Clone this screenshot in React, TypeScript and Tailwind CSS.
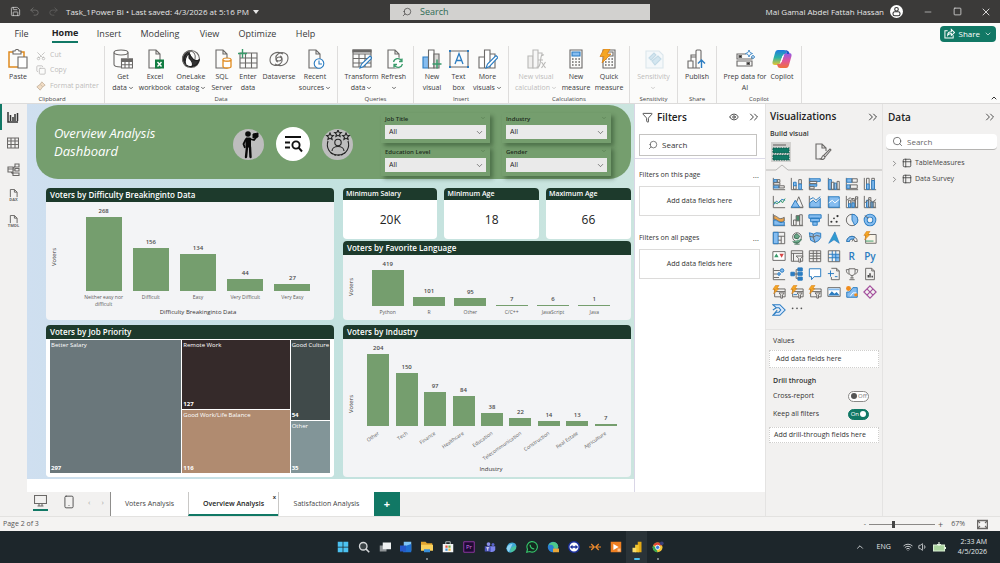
import { useState, type ReactNode } from 'react'
import {
  ChevronDown,
  ChevronRight,
  ChevronUp,
  ChevronsRight,
  Copy,
  Eye,
  Filter,
  Minus,
  Redo2,
  Save,
  Scissors,
  Search,
  Smartphone,
  Square,
  Table2,
  Undo2,
  Volume1,
  Wifi,
  X,
} from 'lucide-react'

const K = '#6b6967'
const B = '#2b7cc1'
const L = '#86bdf0'

function Svg({ size = 20, box = 20, children }: { size?: number; box?: number; children: ReactNode }) {
  return (
    <svg
      width={size}
      height={size}
      viewBox={`0 0 ${box} ${box}`}
      fill="none"
      stroke={K}
      strokeWidth="1.1"
      aria-hidden="true"
      className="shrink-0"
    >
      {children}
    </svg>
  )
}

/* ---------- ribbon icons ---------- */

const doc = <path d="M4 1h7l4 4v14H4zM11 1v4h4" />
const calc = (
  <>
    <path d="M4 1h12v18H4z" />
    <g strokeDasharray="1.6 1.6" strokeWidth="1.5">
      <path d="M6 10h9M6 13h9M6 16h9" />
    </g>
  </>
)

const ribbonIcons: Record<string, ReactNode> = {
  paste: (
    <>
      <path d="M10 18H1V3h15v5" stroke="#e08a1e" strokeWidth="1.5" />
      <path d="M5 5V2h2c0-2 4-2 4 0h2v3z" fill="#fff" />
      <path d="M10 8h9v11h-9z" fill="#fff" />
    </>
  ),
  database: (
    <>
      <ellipse cx="8" cy="3.5" rx="7" ry="2.5" />
      <path d="M1 3.500v12c0 1.500 3 2.500 7 2.500M15 3.500V9" />
      <path d="M8.500 10h11v9h-11z" fill="#fff" />
      <path d="M8.500 10h11v2.500h-11z" fill={K} />
      <path d="M8.500 15.700h11M12 12v7M16 12v7" />
    </>
  ),
  excel: (
    <>
      {doc}
      <path d="M10 10.500h9v9h-9z" fill="#107c41" stroke="none" />
      <path d="M12.500 13l4 4.500M16.500 13l-4 4.500" stroke="#fff" strokeWidth="1.400" />
    </>
  ),
  onelake: (
    <>
      <circle cx="10" cy="10" r="8.500" />
      <path d="M10 1.500C4 2 1 7 1.500 11c.5 3 2 5 4 6.500C3 12 5 6 10 1.500z" fill="#222" />
      <path d="M8 4c2 6 6 9 10 7-1 5-6 8-11 6l-2-1C3 12 5 7 8 4z" fill="#fff" stroke="#222" />
      <path d="M8 4c2 6 6 9 10 7-1 4-4 6-7 6 2-3-1-6-3-8z" fill="#333" stroke="#222" />
      <path d="M10 2c3 1 5 4 4 8" />
    </>
  ),
  sql: (
    <>
      {doc}
      <path d="M11 10.500v7c0 2 8 2 8 0v-7c0 2-8 2-8 0z" fill="#fff" stroke="#e08a1e" strokeWidth="1.300" />
      <ellipse cx="15" cy="10.500" rx="4" ry="1.500" fill="#fff" stroke="#e08a1e" />
    </>
  ),
  enter: (
    <>
      <path d="M2 4h17v15H2zM2 9h17M2 14h17M7.500 4v15M13.500 4v15" />
      <path d="M4.500 0v9M0 4.500h9" stroke="#3a9b6b" strokeWidth="1.400" />
    </>
  ),
  dataverse: (
    <>
      <path d="M14 5C8 1 1 5 1 11c0 5 6 7 10 4 3-2 3-7-1-7-3 0-4 4-1 5" />
      <path d="M6 15c6 4 13 0 13-6 0-5-6-7-10-4-3 2-3 7 1 7 3 0 4-4 1-5" />
    </>
  ),
  recent: (
    <>
      {doc}
      <circle cx="14" cy="14.500" r="4.800" fill="#fff" stroke={B} />
      <path d="M14 11.500v3.500h3" stroke={B} />
    </>
  ),
  transform: (
    <>
      <path d="M1 1h18v17H1zM1 5h18M1 9.500h18M1 14h18M7 5v13M13 5v13" />
      <path d="M1 1h18v2H1z" fill={K} />
      <path d="M8 19l1.500-4L18 7l2 2-8.500 8.500z" fill="#fff" stroke={B} />
    </>
  ),
  refresh: (
    <>
      {doc}
      <circle cx="14" cy="14" r="5.500" fill="#fff" stroke="none" />
      <path d="M9.500 13a4.500 4.500 0 0 1 8-1.500M18 9.500v3h-3M18.500 15a4.500 4.500 0 0 1-8 1.500M10 18.500v-3h3" stroke="#3a9b6b" strokeWidth="1.300" />
    </>
  ),
  newVisual: (
    <>
      <path d="M1 8h5.500v11H1z" fill={L} stroke={B} />
      <path d="M6.500 1H12v18H6.500z" fill="#fff" />
      <path d="M12 5h5v14h-5z" fill="#d9d8d6" />
      <path d="M15 10.500v9M10.500 15h9" stroke="#3a9b6b" strokeWidth="1.500" />
    </>
  ),
  textBox: (
    <>
      <path d="M1 2h18v16H1z" />
      <path d="M6 15l4-10.500L14 15M7.500 11.500h5" stroke={B} strokeWidth="1.300" />
      <path d="M0 1h2v2H0zM18 1h2v2h-2zM0 17h2v2H0zM18 17h2v2h-2z" fill={B} stroke="none" />
    </>
  ),
  moreVisuals: (
    <>
      <path d="M1 8h5.500v11H1zM6.500 1H12v18H6.500zM12 5h5v14h-5z" fill="#fff" />
      <path d="M8 19l1.500-4L18 6.500l2 2-8.500 9z" fill="#fff" stroke={B} />
    </>
  ),
  visualCalc: (
    <>
      <path d="M2 7h5v12H2z" fill="#e3e2e1" />
      <path d="M7 1h5v18H7zM12 4h4v3" fill="#f4f4f4" />
      <path d="M18 6c-3-1-3 2-3.500 6S13 19 10.500 18M12 11h5M15.500 13l4 6M19.500 13l-4 6" />
    </>
  ),
  newMeasure: (
    <>
      {calc}
      <path d="M6 3h8v4H6z" fill={L} stroke={B} />
    </>
  ),
  quick: (
    <>
      {calc}
      <path d="M6 3h8v4H6z" />
      <path d="M5 0h6L8 5h4L3 14l2-6.500H1z" fill="#f5a623" stroke="#d9821b" strokeWidth=".8" />
    </>
  ),
  sensitivity: (
    <>
      <path d="M2 2h13l4 4v13H2z" fill="#edf5fa" stroke="#b6cfdd" />
      <path d="M5 9l5-5 2 2-5 5zM8 12l6-5 3 3-6 6z" fill="#a4cde4" stroke="#7fb3cf" />
    </>
  ),
  publish: (
    <>
      <path d="M1 12h5v7H1zM4 12V6h5v13M9 6V2q0-1 1-1h3q1 0 1 1v9M9 8h-5M6 19h7" />
      <path d="M14.500 19v-8M11 14.500l3.500-3.500 3.500 3.500" stroke={B} strokeWidth="1.400" />
    </>
  ),
  prep: (
    <>
      <path d="M11 5H2v5h15v-2M2 12h15v5H2z" />
      <path d="M4 6.500h2.500v2H4zM12 13.500h2.500v2H12z" fill="#222" />
      <path d="M14 1l1 2.500L17.500 4.500 15 5.500 14 8l-1-2.500L10.500 4.500 13 3.500zM18 6l.6 1.400L20 8l-1.400.6L18 10l-.6-1.400L16 8l1.400-.6z" stroke={B} strokeWidth=".8" fill="#fff" />
    </>
  ),
  copilot: (
    <>
      <defs>
        <linearGradient id="cpA" x1="0" y1="0" x2="0" y2="1">
          <stop offset="0" stopColor="#1f7ae0" />
          <stop offset=".5" stopColor="#2bb3a5" />
          <stop offset="1" stopColor="#e9c52f" />
        </linearGradient>
        <linearGradient id="cpB" x1="0" y1="0" x2="0" y2="1">
          <stop offset="0" stopColor="#8f5be8" />
          <stop offset=".5" stopColor="#e0559b" />
          <stop offset="1" stopColor="#f0713a" />
        </linearGradient>
      </defs>
      <path d="M6 1h6q2 0 2.500 2L15 5h-2q-2 0-2.500 2L8 14q-.5 2-2.500 2H3q-3 0-2.500-3L3 4q.7-3 3-3z" fill="url(#cpA)" stroke="none" />
      <path d="M14 19H8q-2 0-2.500-2L5 15h2q2 0 2.500-2L12 6q.5-2 2.500-2H17q3 0 2.500 3L17 16q-.7 3-3 3z" fill="url(#cpB)" stroke="none" />
      <path d="M10.500 7h1.200L9.500 13H8.300z" fill="#fff" stroke="none" />
      <path d="M12 1q2 0 2.500 2l.5 2h2q1-2-1-3-1-1-4-1z" fill="#1f55c8" stroke="none" />
    </>
  ),
}

type RibbonItem = { icon: string; lines: string[]; width: string; menu?: boolean; disabled?: boolean }
type RibbonSection = { name: string; width: string; items: RibbonItem[] }

const ribbon: RibbonSection[] = [
  {
    name: 'Data',
    width: 'w-[233px]',
    items: [
      { icon: 'database', lines: ['Get', 'data'], width: 'w-7', menu: true },
      { icon: 'excel', lines: ['Excel', 'workbook'], width: 'w-[36px]' },
      { icon: 'onelake', lines: ['OneLake', 'catalog'], width: 'w-[36px]', menu: true },
      { icon: 'sql', lines: ['SQL', 'Server'], width: 'w-[26px]' },
      { icon: 'enter', lines: ['Enter', 'data'], width: 'w-[26px]' },
      { icon: 'dataverse', lines: ['Dataverse'], width: 'w-[36px]' },
      { icon: 'recent', lines: ['Recent', 'sources'], width: 'w-[36px]', menu: true },
    ],
  },
  {
    name: 'Queries',
    width: 'w-[76px]',
    items: [
      { icon: 'transform', lines: ['Transform', 'data'], width: 'w-9', menu: true },
      { icon: 'refresh', lines: ['Refresh', ''], width: 'w-7', menu: true },
    ],
  },
  {
    name: 'Insert',
    width: 'w-[95px]',
    items: [
      { icon: 'newVisual', lines: ['New', 'visual'], width: 'w-[27px]' },
      { icon: 'textBox', lines: ['Text', 'box'], width: 'w-[26px]' },
      { icon: 'moreVisuals', lines: ['More', 'visuals'], width: 'w-[32px]', menu: true },
    ],
  },
  {
    name: 'Calculations',
    width: 'w-[121px]',
    items: [
      { icon: 'visualCalc', lines: ['New visual', 'calculation'], width: 'w-[46px]', menu: true, disabled: true },
      { icon: 'newMeasure', lines: ['New', 'measure'], width: 'w-[34px]' },
      { icon: 'quick', lines: ['Quick', 'measure'], width: 'w-[32px]' },
    ],
  },
  {
    name: 'Sensitivity',
    width: 'w-[48px]',
    items: [{ icon: 'sensitivity', lines: ['Sensitivity', ''], width: 'w-10', menu: true, disabled: true }],
  },
  {
    name: 'Share',
    width: 'w-[39px]',
    items: [{ icon: 'publish', lines: ['Publish'], width: 'w-9' }],
  },
  {
    name: 'Copilot',
    width: 'w-[85px]',
    items: [
      { icon: 'prep', lines: ['Prep data for', 'AI'], width: 'w-[46px]' },
      { icon: 'copilot', lines: ['Copilot'], width: 'w-7' },
    ],
  },
]

/* ---------- visual gallery ---------- */

const axis = <path d="M1.500 1v13.500H15" />
const bolt = <path d="M4 .5h4L5.500 4H8L2 10l1.500-5H1z" fill="#f5a623" stroke="#d9821b" strokeWidth=".7" />
const slicerBody = (
  <>
    <path d="M3 4.500h12v9H3zM3 7.500h12" />
    <path d="M8 9h6l-2 2.500V15h-2v-3.500z" fill="#e9e8e7" />
  </>
)

const gallery: [string, ReactNode][] = [
  ['Stacked bar chart', <>{axis}<path d="M2 3h4v3H2zM2 10h6v2.500H2z" fill={L} stroke={B} /><path d="M6 3h3v3H6zM8 10h6v2.500H8zM2 6.500h7V9H2z" /></>],
  ['Stacked column chart', <>{axis}<path d="M4 9h3v5H4zM10 3h3v5h-3z" /><path d="M4 6h3v4H4zM10 8h3v6h-3z" fill={L} stroke={B} /></>],
  ['Clustered bar chart', <>{axis}<path d="M2 2h12v3H2zM2 8h8v2.500H2z" fill={L} stroke={B} /><path d="M2 5h8v2.500H2zM2 11h5v2.500H2z" /></>],
  ['Clustered column chart', <>{axis}<path d="M2 3h3v11H2zM8 7h3v7H8z" fill={L} stroke={B} /><path d="M5 6h3v8H5zM11.500 5H14v9h-2.500z" /></>],
  ['100% stacked bar chart', <>{axis}<path d="M2 2h6v4H2zM2 9h4v4H2z" fill={L} stroke={B} /><path d="M8 2h6v4H8zM6 9h8v4H6z" /></>],
  ['100% stacked column chart', <>{axis}<path d="M4 1.500h3v12H4zM10 1.500h3v12h-3z" /><path d="M4 8h3v6H4zM10 4h3v10h-3z" fill={L} stroke={B} /></>],
  ['Line chart', <>{axis}<path d="M2 11l3-4 3 2 3-4 4 1" stroke={B} /><path d="M2 8l4 2 4-4 2 3 3-5" stroke="#3a9b6b" /></>],
  ['Area chart', <><path d="M1 14.500h14M5 14l5-12 5 12z" /><path d="M1.500 14L6 6l5 8z" fill={L} stroke={B} /></>],
  ['Stacked area chart', <>{axis}<path d="M2 9l4-3 3 3 5-5v10H2z" fill={L} stroke={B} /><path d="M2 5l4-2 3 3 5-4" stroke={B} /></>],
  ['100% stacked area chart', <>{axis}<path d="M2 2h12v12H2z" fill={L} stroke={B} /><path d="M2 9l4-3 3 3 5-4" stroke="#fff" /></>],
  ['Line and stacked column chart', <>{axis}<path d="M4 6h2.500v8H4zM8 4h2.500v10H8zM12 2h2.500v12H12z" /><path d="M4 10h2.500v4H4zM8 9h2.500v5H8z" fill={L} stroke={B} /><path d="M2 6l4-3 4 4 5-4" /></>],
  ['Line and clustered column chart', <>{axis}<path d="M4 6h2.500v8H4zM9 8h2.500v6H9z" fill={L} stroke={B} /><path d="M6.500 3H9v11H6.500zM11.500 8H14v6h-2.500zM2 9l5-4 4 3 4-3" /></>],
  ['Ribbon chart', <>{axis}<path d="M2 3c5 0 5 6 12 2v4C8 13 7 7 2 7z" fill="#e9a24a" stroke={K} /><path d="M2 8c5 0 6 5 12 2v4H2z" fill={L} stroke={B} /></>],
  ['Waterfall chart', <>{axis}<path d="M4 8h3v6H4zM11 2h3v12h-3z" /><path d="M7 3h4v6H7z" fill="#4c8f6e" stroke={K} /></>],
  ['Funnel chart', <path d="M1 2h14v4H1zM3 6h10v4H3zM5.500 10h5v4h-5z" fill={L} stroke={B} />],
  ['Scatter chart', <>{axis}<g fill="#333" stroke="none"><circle cx="5" cy="10" r="1.200" /><circle cx="8" cy="6" r="1" /><circle cx="12" cy="3.500" r="1.300" /><circle cx="11" cy="10" r="1.200" /></g></>],
  ['Pie chart', <><circle cx="8" cy="8" r="6.500" /><path d="M8 1.500A6.500 6.500 0 0 1 11 13.800L8 8z" fill={L} stroke={B} /></>],
  ['Donut chart', <><circle cx="8" cy="8" r="5" stroke={B} strokeWidth="4.500" /><circle cx="8" cy="8" r="5" stroke={L} strokeWidth="2.500" /><path d="M2 3l4 3" /></>],
  ['Treemap', <><path d="M1.500 1.500h13v13h-13z" /><path d="M1.500 1.500H7v13H1.500z" fill={L} stroke={B} /><path d="M7 6h7.500M10.500 6v8.500M7 10.500h3.500" /></>],
  ['Map', <><circle cx="8" cy="7" r="5" /><path d="M5 5l3-2 3 3-2 3-4-1zM3 12c3 3 9 2 10-3M8 13v2M5 15h6" fill="#6aa888" stroke="#3d6d55" /></>],
  ['Filled map', <><path d="M1.500 2l5 1.500 3-1.500 5 .5v5L12 11l-4 2-5-2.500z" fill={L} stroke={B} /><path d="M1.500 6l5 1 3-2 4 1M6 3.500V7l2 6" /></>],
  ['Azure map', <path d="M9 1l5 13-6-4-6 4z" fill="#2f9bd0" stroke={B} strokeWidth=".8" />],
  ['Gauge', <><path d="M2 12a6 6 0 0 1 12 0h-3a3 3 0 0 0-6 0z" /><path d="M2 12a6 6 0 0 1 9-5L9.500 9.500A3 3 0 0 0 5 12z" fill={L} stroke={B} /><path d="M8 12l2-3" /></>],
  ['Card', <><path d="M3 4h12v10H3z" fill="#faf4e8" /><path d="M3 11.500h9" stroke="#3a9b6b" />{bolt}</>],
  ['Multi-row card', <><path d="M1 3h14v10H1z" fill="#fff" /><path d="M2.500 9.500L5 5l2.500 4.500z" fill="#3a9b6b" stroke="none" /><path d="M8.500 5.500h5L11 10z" fill="#d64545" stroke="none" /></>],
  ['Slicer', <><path d="M1.500 2h13v12h-13zM1.500 5h13M4 5v9" /><path d="M7 8h8l-3 3v4h-2v-4z" fill="#f2f1f0" /></>],
  ['Table', <path d="M1.500 2h13v12.500h-13zM1.500 5h13M1.500 8h13M1.500 11h13M6 2v12.500M10 2v12.500" />],
  ['Matrix', <><path d="M6 6h8.500v8.500H10V10H6z" fill={L} stroke="none" /><path d="M6 2v12.500M10 2v12.500M1.500 6h13M1.500 10h13" stroke={B} /><path d="M1.500 2h13v12.500h-13z" /></>],
  ['R script visual', 'R'],
  ['Python visual', 'Py'],
  ['Key influencers', <>{axis}<path d="M2 4h7M2 8h4M2 12h6" /><circle cx="11.500" cy="4" r="2" fill={L} stroke={B} /><circle cx="8" cy="8" r="1.500" fill={L} stroke={B} /></>],
  ['Decomposition tree', <><path d="M1 6h4v4H1zM9 1h5v3.500H9zM9 6h5v3.500H9zM9 11.500h5V15H9z" fill={B} stroke={B} /><path d="M5 8h4M7 3v10M7 3h2M7 13h2" /></>],
  ['Q&A', <path d="M1.500 2h13v9H7l-3 3.500V11H1.500z" fill="#fff" stroke={B} />],
  ['Narrative', <><path d="M5 1.500h6l3 3v10H5v-3M11 1.500v3h3" /><path d="M4 4v7M1 7.500h7M9 11h3" stroke={B} /></>],
  ['Metrics', <><path d="M4.500 2h7v4c0 5-7 5-7 0zM4.500 3h-3c0 4 2 5 3.500 5M11.500 3h3c0 4-2 5-3.500 5M8 10v3M5 14.500h6M6 12.500h4" /></>],
  ['Paginated report', <><path d="M3 1.500h7l3 3v10H3zM10 1.500v3h3" /><path d="M6 12V9M8 12V7M10.500 12v-2" stroke="#333" strokeWidth="1.500" /></>],
  ['Button slicer', <>{slicerBody}{bolt}</>],
  ['List slicer', <>{slicerBody}<path d="M4 11h4" stroke={B} />{bolt}</>],
  ['Text slicer', <>{slicerBody}{bolt}</>],
  ['Image', <><path d="M1 3h14v10H1z" fill="#fff" /><path d="M1.500 12l4-5 3 3 2.500-2 3.500 4z" fill={B} stroke="none" /><path d="M1.500 5h13" stroke={L} strokeWidth="2" /></>],
  ['Azure shape map', <><path d="M2 8h3l4-5h5v11H2z" fill={L} stroke={B} /><circle cx="4" cy="4" r="2.800" fill="#f08c1d" stroke="none" /><circle cx="12.500" cy="11" r="2" fill="#f08c1d" stroke="none" /><path d="M6 13l3-4h4" stroke="#fff" /></>],
  ['Power Apps', <path d="M8 1l7 7-7 7-7-7zM4.500 4.500l7 7M11.500 4.500l-7 7" stroke="#a34e9c" strokeWidth="1.300" />],
  ['Power Automate', <path d="M1 2h8l6 6-6 6H1l4-3.500h3L10 8 8 5.500H5zM1 8l4-2.500M1 14l5-6" fill="#dbeafe" stroke={B} strokeWidth="1.200" />],
  ['More visuals', <g fill="#555" stroke="none"><circle cx="3" cy="6" r="1" /><circle cx="8" cy="6" r="1" /><circle cx="13" cy="6" r="1" /></g>],
]

/* ---------- report data ---------- */

type Datum = { name: string; value: number }

const difficulty: Datum[] = [
  { name: 'Neither easy nor difficult', value: 268 },
  { name: 'Difficult', value: 156 },
  { name: 'Easy', value: 134 },
  { name: 'Very Difficult', value: 44 },
  { name: 'Very Easy', value: 27 },
]

const languages: Datum[] = [
  { name: 'Python', value: 419 },
  { name: 'R', value: 101 },
  { name: 'Other', value: 95 },
  { name: 'C/C++', value: 7 },
  { name: 'JavaScript', value: 6 },
  { name: 'Java', value: 1 },
]

const industries: Datum[] = [
  { name: 'Other', value: 204 },
  { name: 'Tech', value: 150 },
  { name: 'Finance', value: 97 },
  { name: 'Healthcare', value: 84 },
  { name: 'Education', value: 38 },
  { name: 'Telecommunication', value: 22 },
  { name: 'Construction', value: 14 },
  { name: 'Real Estate', value: 13 },
  { name: 'Agriculture', value: 7 },
]

const priorities = [
  [{ name: 'Better Salary', value: 297, color: 'bg-[#6a777b]' }],
  [
    { name: 'Remote Work', value: 127, color: 'bg-[#352a2a]' },
    { name: 'Good Work/Life Balance', value: 116, color: 'bg-[#b08b70]' },
  ],
  [
    { name: 'Good Culture', value: 54, color: 'bg-[#404a4a]' },
    { name: 'Other', value: 35, color: 'bg-[#829598]' },
  ],
]

function Panel({ title, children }: { title: string; children: ReactNode }) {
  return (
    <section className="flex flex-col overflow-hidden rounded-sm bg-[#f3f4f6]">
      <h2 className="h-[14px] shrink-0 bg-[#1d3a2c] px-1 text-[8px] leading-[14px] font-semibold text-white">{title}</h2>
      {children}
    </section>
  )
}

function Bars({
  data,
  peak,
  barWidth,
  slanted = false,
}: {
  data: Datum[]
  peak: number
  barWidth: string
  slanted?: boolean
}) {
  const max = Math.max(...data.map((d) => d.value))
  return (
    <>
      <div className="flex items-end">
        {data.map((d) => (
          <div key={d.name} className="flex flex-1 flex-col items-center">
            <span className="text-[6px] leading-[12px] font-semibold text-[#4a4a4a]">{d.value}</span>
            <div
              className={`bg-[#759e6e] ${barWidth}`}
              style={{ height: Math.max(1, Math.round((d.value / max) * peak)) }}
            />
          </div>
        ))}
      </div>
      <div className="flex text-[5px] leading-[7px] text-[#5c5c5c]">
        {data.map((d) => (
          <div key={d.name} className={`flex min-w-0 flex-1 ${slanted ? 'h-9 justify-end pt-1 pr-4' : 'justify-center px-1 pt-[3px] text-center'}`}>
            <span className={slanted ? 'h-2 origin-top-right -rotate-[35deg] whitespace-nowrap' : ''}>{d.name}</span>
          </div>
        ))}
      </div>
    </>
  )
}

function Voters() {
  return (
    <div className="flex w-4 shrink-0 items-center justify-center">
      <span className="-rotate-90 text-[6px] leading-none text-[#333]">Voters</span>
    </div>
  )
}

function Slicer({ label }: { label: string }) {
  return (
    <label className="block px-1 pt-[2px] pb-1 text-[6px] leading-[9px] font-semibold text-[#1c2b1c] shadow-[3px_3px_4px_rgba(30,60,30,0.45)]">
      <span className="flex justify-between">
        {label}
        <ChevronDown size={6} className="text-[#4f7249]" />
      </span>
      <span className="relative mt-px block">
        <select className="block h-[14px] w-full appearance-none bg-[#eaeaea] pl-1 text-[7px] font-normal text-[#222]">
          <option>All</option>
        </select>
        <ChevronDown size={9} strokeWidth={1.5} className="pointer-events-none absolute top-[3px] right-[2px] text-[#333]" />
      </span>
    </label>
  )
}

function ReportHeader() {
  return (
    <header className="mr-[3px] ml-[9px] flex h-[74px] items-center rounded-[22px] bg-[#759e6e] pr-5 pl-[18px]">
      <h1 className="w-[179px] text-[13px] leading-[18px] text-white italic">
        Overview Analysis
        <br />
        Dashboard
      </h1>
      <div className="flex items-center gap-[12px] pt-1">
        <button aria-label="Voters page" className="grid size-[31px] place-items-center rounded-full bg-[#bdbdbd]">
          <svg width="27" height="29" viewBox="0 0 27 29" fill="none" stroke="#0a0a0a" aria-hidden="true">
            <circle cx="13" cy="4" r="2.800" fill="#0a0a0a" stroke="none" />
            <path d="M11 8h4.500v9H11z" fill="#0a0a0a" strokeWidth="1" />
            <path d="M12 17l-1 10M15 17l.5 10" strokeWidth="2.400" strokeLinecap="round" />
            <path d="M11 9l-2.500 5 1.500 4M15 9l4 1 2.500-3" strokeWidth="1.800" />
            <path d="M18 4l5-1v4l-5 1z" fill="#0a0a0a" />
          </svg>
        </button>
        <button aria-label="Overview page" className="grid size-[34px] place-items-center rounded-full bg-white">
          <svg width="20" height="20" viewBox="0 0 20 20" fill="none" stroke="#111" strokeWidth="1.900" aria-hidden="true">
            <path d="M2 3h16M2 8.500h5M2 13.500h5" />
            <circle cx="13" cy="11" r="3.600" />
            <path d="M15.500 13.500l3.500 4" />
          </svg>
        </button>
        <button aria-label="Satisfaction page" className="grid size-[31px] place-items-center rounded-full bg-[#bdbdbd]">
          <svg width="28" height="28" viewBox="0 0 28 28" fill="none" stroke="#222" strokeWidth="1.100" aria-hidden="true">
            <path d="M6 3l1 2.200 2.400.3-1.800 1.600.5 2.400L6 8.300 3.900 9.500l.5-2.400L2.600 5.500 5 5.200zM14 0l1 2.200 2.400.3-1.800 1.600.5 2.400L14 5.300l-2.100 1.200.5-2.400-1.800-1.600 2.400-.3zM22 3l1 2.200 2.400.3-1.800 1.600.5 2.400L22 8.300l-2.100 1.200.5-2.400-1.800-1.600 2.400-.3z" />
            <circle cx="14" cy="12.500" r="3.200" />
            <path d="M8 21c0-6 12-6 12 0" />
            <path d="M4 11c-2 6 1 14 10 14s12-8 10-14" />
            <path d="M7 23c4 3 10 3 14 0" strokeDasharray="2 1.500" />
          </svg>
        </button>
      </div>
      <div className="ml-auto grid w-[230px] grid-cols-2 gap-x-3 gap-y-[3px] pt-1">
        <Slicer label="Job Title" />
        <Slicer label="Industry" />
        <Slicer label="Education Level" />
        <Slicer label="Gender" />
      </div>
    </header>
  )
}

function Kpi({ title, value, grow }: { title: string; value: string; grow: string }) {
  return (
    <section className={`min-w-0 overflow-hidden rounded-sm bg-white text-center ${grow}`}>
      <h2 className="bg-[#1d3a2c] px-[3px] text-left text-[7px] leading-[12px] font-semibold whitespace-nowrap text-white">{title}</h2>
      <p className="text-[12px] leading-[39px] text-[#222]">{value}</p>
    </section>
  )
}

function Report() {
  return (
    <main className="min-w-0 flex-1 bg-white pb-3">
      <div className="bg-linear-to-r from-[#cfdff0] via-[#c3e2df] to-[#cbe5df] pt-px pb-[2px]">
        <ReportHeader />
        <div className="mt-[9px] mr-[3px] ml-[19px] grid grid-cols-2 gap-x-[9px] gap-y-[5px]">
          <Panel title="Voters by Difficulty Breakinginto Data">
            <div className="flex flex-1 pt-[3px] pr-[18px]">
              <Voters />
              <div className="min-w-0 flex-1 pl-[18px]">
                <Bars data={difficulty} peak={74} barWidth="w-9" />
              </div>
            </div>
            <p className="pb-1 pl-4 text-center text-[6px] leading-[8px] text-[#333]">Difficulty Breakinginto Data</p>
          </Panel>

          <div className="flex flex-col gap-[2px]">
            <div className="flex gap-[7px]">
              <Kpi title="Minimum Salary" value="20K" grow="flex-[10]" />
              <Kpi title="Minimum Age" value="18" grow="flex-[10]" />
              <Kpi title="Maximum Age" value="66" grow="flex-[9]" />
            </div>
            <Panel title="Voters by Favorite Language">
              <div className="flex pt-[3px] pr-4 pb-1">
                <Voters />
                <div className="min-w-0 flex-1 pl-[8px]">
                  <Bars data={languages} peak={36} barWidth="w-8" />
                </div>
              </div>
            </Panel>
          </div>

          <Panel title="Voters by Job Priority">
            <div className="flex min-h-[138px] flex-1 gap-px bg-white p-1 pt-px">
              {priorities.map((column, i) => (
                <div
                  key={i}
                  className="flex min-w-0 basis-0 flex-col gap-px"
                  style={{ flexGrow: column.reduce((sum, d) => sum + d.value, 0) }}
                >
                  {column.map((d) => (
                    <div
                      key={d.name}
                      className={`flex basis-0 flex-col justify-between overflow-hidden px-px py-px text-[6px] leading-[8px] font-medium whitespace-nowrap text-white ${d.color}`}
                      style={{ flexGrow: d.value }}
                    >
                      <span>{d.name}</span>
                      <span className="font-bold">{d.value}</span>
                    </div>
                  ))}
                </div>
              ))}
            </div>
          </Panel>

          <Panel title="Voters by Industry">
            <div className="flex flex-1 pt-[3px] pr-[11px]">
              <Voters />
              <div className="min-w-0 flex-1 pl-[5px]">
                <Bars data={industries} peak={72} barWidth="w-[22px]" slanted />
              </div>
            </div>
            <p className="pb-1 pl-2 text-center text-[6px] leading-[8px] text-[#333]">Industry</p>
          </Panel>
        </div>
      </div>
    </main>
  )
}

/* ---------- window chrome ---------- */

function TitleBar() {
  return (
    <div className="flex h-[23px] items-center bg-[#3b3a39] text-[8px] text-[#e6e6e6]">
      <div className="flex flex-[39] items-center">
        <button aria-label="Save" className="ml-[10px]"><Save size={11} strokeWidth={1.500} /></button>
        <button aria-label="Undo" className="ml-2 text-[#6d6c6b]"><Undo2 size={11} /></button>
        <button aria-label="Redo" className="ml-2 text-[#5d5c5b]"><Redo2 size={11} /></button>
        <button className="ml-[7px] flex items-center gap-1 whitespace-nowrap">
          Task_1Power Bi • Last saved: 4/3/2026 at 5:16 PM
          <svg width="6" height="4" viewBox="0 0 6 4" aria-hidden="true"><path d="M0 0h6L3 4z" fill="#e6e6e6" /></svg>
        </button>
      </div>
      <label className="flex h-4 w-[260px] items-center gap-2 bg-[#d2d1cf] px-3 text-[#3b3a39]">
        <Search size={10} strokeWidth={1.600} className="-scale-x-100" />
        <input aria-label="Search" placeholder="Search" className="min-w-0 flex-1 text-[9px] outline-none placeholder:text-[#2f6b54]" />
      </label>
      <div className="flex flex-[35] items-center justify-end">
        <span className="whitespace-nowrap">Mai Gamal Abdel Fattah Hassan</span>
        <button aria-label="Account" className="ml-[6px]">
          <Svg size={13} box={13}>
            <circle cx="6.500" cy="6.500" r="6.500" fill="#fff" stroke="none" />
            <circle cx="6.500" cy="4.300" r="1.800" stroke="#333" />
            <rect x="3" y="6.800" width="7" height="4" rx="1.800" fill="#fff" stroke="#333" />
          </Svg>
        </button>
        <button aria-label="Minimize" className="ml-5"><Minus size={10} strokeWidth={1.500} /></button>
        <button aria-label="Maximize" className="ml-5"><Square size={9} strokeWidth={2} /></button>
        <button aria-label="Close" className="mr-2 ml-[18px]"><X size={12} strokeWidth={1.800} /></button>
      </div>
    </div>
  )
}

const menuTabs = [
  { name: 'File', width: 'w-[43px]' },
  { name: 'Home', width: 'w-[44px]' },
  { name: 'Insert', width: 'w-[44px]' },
  { name: 'Modeling', width: 'w-[58px]' },
  { name: 'View', width: 'w-[41px]' },
  { name: 'Optimize', width: 'w-[55px]' },
  { name: 'Help', width: 'w-[41px]' },
]

function MenuTabs() {
  return (
    <nav className="flex h-[21px] items-center bg-[#fbfbfa] text-[9px] text-[#3a3a3a]">
      {menuTabs.map((tab) => (
        <button key={tab.name} className={`flex justify-center ${tab.width}`}>
          <span className={tab.name === 'Home' ? 'border-b-2 border-[#117865] leading-[17px] font-bold text-[#222]' : 'leading-[19px]'}>
            {tab.name}
          </span>
        </button>
      ))}
      <button className="mr-1 ml-auto flex h-4 items-center gap-1 rounded-sm bg-[#117865] px-1 text-[8px] text-white">
        <Svg size={11} box={12}>
          <path d="M4 3H1v8h9V8M4 8c0-3 2-4 4-4V1.500L11.500 5 8 8V6C6 6 5 6.500 4 8z" stroke="#fff" />
        </Svg>
        Share
        <ChevronDown size={8} />
      </button>
    </nav>
  )
}

function RibbonButton({ item }: { item: RibbonItem }) {
  return (
    <button
      disabled={item.disabled}
      className={`flex flex-col items-center gap-[2px] whitespace-nowrap text-[7px] leading-[11px] ${item.width} ${
        item.disabled ? 'text-[#bdbcbb]' : 'text-[#3a3a3a]'
      }`}
    >
      <span className={item.disabled ? 'opacity-45' : ''}><Svg>{ribbonIcons[item.icon]}</Svg></span>
      <span className="flex flex-col items-center">
        {item.lines.map((line, i) => (
          <span key={i} className="flex h-[11px] items-center gap-px">
            {line}
            {item.menu && i === item.lines.length - 1 && <ChevronDown size={6} strokeWidth={3} />}
          </span>
        ))}
      </span>
    </button>
  )
}

function Ribbon() {
  return (
    <div className="flex h-[60px] border-b border-[#dcdbda] bg-[#fbfbfa]">
      <div className="mt-[2px] flex w-[105px] flex-col justify-between border-r border-[#dedddc]">
        <div className="flex pt-[3px]">
          <button className="flex w-9 flex-col items-center gap-[2px] text-[7px] leading-[11px] text-[#3a3a3a]">
            <Svg>{ribbonIcons.paste}</Svg>
            Paste
          </button>
          <div className="flex flex-col items-start text-[7px] text-[#bdbcbb]">
            <button disabled className="flex h-[13px] items-center gap-1"><Scissors size={10} className="-rotate-90" />Cut</button>
            <button disabled className="flex h-4 items-center gap-1"><Copy size={10} />Copy</button>
            <button disabled className="flex h-4 items-center gap-1">
              <Svg size={10} box={12}>
                <path d="M7 1l4 4-3 2-3-3zM5 4L1 7l4 4 3-4" fill="#f1dcc4" stroke="#c9b8a4" />
              </Svg>
              Format painter
            </button>
          </div>
        </div>
        <span className="text-center text-[6px] leading-[8px] text-[#444]">Clipboard</span>
      </div>
      {ribbon.map((group) => (
        <div key={group.name} className={`mt-[2px] flex flex-col justify-between border-r border-[#dedddc] ${group.width}`}>
          <div className="flex justify-center pt-[3px]">
            {group.items.map((item) => (
              <RibbonButton key={item.icon} item={item} />
            ))}
          </div>
          <span className="text-center text-[6px] leading-[8px] text-[#444]">{group.name}</span>
        </div>
      ))}
      <button aria-label="Collapse ribbon" className="mr-[2px] mb-px ml-auto self-end text-[#333]"><ChevronUp size={8} strokeWidth={3} /></button>
    </div>
  )
}

function ViewRail() {
  return (
    <nav className="w-[27px] shrink-0 bg-[#f2f1f0]">
      <button aria-label="Report view" className="flex h-[26px] w-full items-center border-l-2 border-[#117865] pl-[5px]">
        <Svg size={12} box={12}><path d="M1 1v10h10M3.500 10V4M6 10V6M8 10V3M10.500 10V2" stroke="#333" strokeWidth="1.500" /></Svg>
      </button>
      <button aria-label="Table view" className="flex h-[26px] w-full items-center pl-[7px]">
        <Svg size={12} box={12}><path d="M.5 1h11v10H.5zM.5 4h11M.5 7.500h11M4 1v10M8 1v10" /></Svg>
      </button>
      <button aria-label="Model view" className="flex h-[26px] w-full items-center pl-[7px]">
        <Svg size={13} box={13}><path d="M1 4h5v5H1zM8 1h4v3H8zM8 5.500h4v2.500H8zM6 10h6v2.500H6zM6 6l2-3M6 7h2M4 9l2 2M1 6h5" /></Svg>
      </button>
      {['DAX', 'TMDL'].map((name) => (
        <button key={name} className="flex h-[26px] w-full flex-col items-center justify-center">
          <Svg size={9} box={10}><path d="M1.500 9V.5H6l3 3V9M6 .5v3h3" /></Svg>
          <span className="text-[4px] leading-[4px] font-bold text-[#666]">{name}</span>
        </button>
      ))}
    </nav>
  )
}

function FilterWell({ title }: { title: string }) {
  return (
    <div className="pr-[5px] pl-[4px]">
      <div className="flex h-[12px] items-center justify-between">
        <h3 className="text-[7px] text-[#333]">{title}</h3>
        <button aria-label={`${title} options`} className="mr-px text-[8px] leading-none text-[#444]">…</button>
      </div>
      <button className="mt-[5px] h-[30px] w-full border border-[#dcdbda] text-[7px] text-[#333]">Add data fields here</button>
    </div>
  )
}

function FiltersPane() {
  return (
    <aside className="w-[131px] shrink-0 border-l border-[#d9d6e6] bg-white">
      <div className="flex h-[26px] items-center pr-[4px] pl-[7px] text-[#333]">
        <Filter size={11} strokeWidth={1.800} />
        <h2 className="ml-1 flex-1 text-[10px] font-semibold text-[#222]">Filters</h2>
        <button aria-label="Show filter pane"><Eye size={10} /></button>
        <button aria-label="Collapse filters" className="ml-2"><ChevronsRight size={14} strokeWidth={1.600} /></button>
      </div>
      <label className="mt-1 mr-2 ml-[4px] flex h-[22px] items-center gap-1 border border-[#c4c3c1] px-2 text-[#444]">
        <Search size={10} strokeWidth={1.600} className="-scale-x-100" />
        <input aria-label="Search filters" placeholder="Search" className="min-w-0 flex-1 text-[8px] outline-none placeholder:text-[#333]" />
      </label>
      <div className="mt-[2px] border-t border-[#dcdae8] pt-[10px]">
        <FilterWell title="Filters on this page" />
        <div className="h-4" />
        <FilterWell title="Filters on all pages" />
      </div>
    </aside>
  )
}

function Toggle({ label, initial }: { label: string; initial: boolean }) {
  const [on, setOn] = useState(initial)
  return (
    <label className="flex h-[18px] items-center justify-between pr-[10px] pl-1">
      {label}
      <input type="checkbox" checked={on} onChange={() => setOn(!on)} className="sr-only" />
      <span
        className={`flex h-[11px] w-[21px] items-center gap-px rounded-full border px-[2px] text-[6px] leading-none ${
          on ? 'flex-row-reverse border-[#117865] bg-[#117865] text-white' : 'border-[#8a8886] bg-white text-[#777]'
        }`}
      >
        <span className={`size-[6px] shrink-0 rounded-full ${on ? 'bg-white' : 'bg-[#555]'}`} />
        {on ? 'On' : 'Off'}
      </span>
    </label>
  )
}

function VisualizationsPane() {
  return (
    <aside className="w-[117px] shrink-0 border-l border-[#e4e3e2] bg-[#f2f1f0] text-[7px] text-[#333]">
      <div className="flex h-[25px] items-center justify-between pr-[2px] pl-[4px]">
        <h2 className="text-[10px] font-semibold text-[#222]">Visualizations</h2>
        <button aria-label="Collapse visualizations"><ChevronsRight size={14} strokeWidth={1.600} /></button>
      </div>
      <h3 className="pl-[4px] leading-[10px] font-semibold">Build visual</h3>
      <div className="flex gap-[22px] pt-[3px] pl-[5px]">
        <button aria-label="Build visual" className="grid size-5 place-items-center bg-[#d2d1cf]">
          <Svg size={18} box={18}>
            <path d="M1 2h13" />
            <path d="M1 5h16v5H1zM1 12h16v5H1z" fill="#117865" stroke="#0c5a4b" strokeDasharray="1.500 1" />
          </Svg>
        </button>
        <button aria-label="Format page" className="grid size-5 place-items-center">
          <Svg size={18} box={18}>
            <path d="M8 16H2V1h6l4 4v3M8 1v4h4" />
            <path d="M17 7l-6 7-1.500-1.500L16 6zM9.500 12.500c-2 0-1 3-3 3.500 2 1 4.500 0 4.500-2" />
          </Svg>
        </button>
      </div>
      <svg width="100%" height="9" className="mb-[6px] block" aria-hidden="true">
        <path d="M0 8h10l6-5 6 5h200" fill="none" stroke="#b9b8b6" />
      </svg>
      <div className="grid grid-cols-6 gap-y-[4px] pr-[3px] pl-1">
        {gallery.map(([name, icon]) => (
          <button key={name} aria-label={name} className="grid h-[14px] place-items-center text-[10px] leading-none font-semibold text-[#2b7cc1]">
            {typeof icon === 'string' ? icon : <Svg size={14} box={16}>{icon}</Svg>}
          </button>
        ))}
      </div>
      <div className="mt-3 border-t border-[#e4e3e2] px-[3px] pt-[5px]">
        <h3 className="pl-1 leading-[12px]">Values</h3>
        <button className="mt-[3px] h-[18px] w-full max-w-[110px] border border-dotted border-[#d0cfcd] bg-white px-1 text-left">
          <span className="pl-[2px]">Add data fields here</span>
        </button>
        <h3 className="mt-[7px] pl-1 leading-[12px] font-semibold">Drill through</h3>
        <Toggle label="Cross-report" initial={false} />
        <Toggle label="Keep all filters" initial />
        <button className="mt-1 h-4 w-full max-w-[110px] border border-dotted border-[#d0cfcd] bg-white px-1 text-left whitespace-nowrap">
          Add drill-through fields here
        </button>
      </div>
    </aside>
  )
}

function DataPane() {
  return (
    <aside className="w-[118px] shrink-0 border-l border-[#e4e3e2] bg-[#f2f1f0] px-[3px] text-[8px] text-[#444]">
      <div className="flex h-[26px] items-center justify-between pl-[2px]">
        <h2 className="text-[10px] font-semibold text-[#222]">Data</h2>
        <button aria-label="Collapse data"><ChevronsRight size={14} strokeWidth={1.600} /></button>
      </div>
      <label className="mt-1 flex h-4 items-center gap-1 rounded-sm border-b border-[#b5b4b2] bg-white px-[6px]">
        <Search size={11} strokeWidth={1.500} />
        <input aria-label="Search data" placeholder="Search" className="min-w-0 flex-1 outline-none placeholder:text-[#666]" />
      </label>
      <div className="pt-[5px]">
        {['TableMeasures', 'Data Survey'].map((name) => (
          <button key={name} className="flex h-4 items-center gap-[3px] pl-1 text-[7px] whitespace-nowrap">
            <ChevronRight size={9} strokeWidth={1.500} />
            <Table2 size={10} />
            {name}
          </button>
        ))}
      </div>
    </aside>
  )
}

function PageTabs() {
  return (
    <nav className="flex h-6 items-stretch bg-[#f2f1f0] text-[7px] text-[#444]">
      <div className="ml-[27px] flex w-[83px] items-center pb-1 pl-[6px]">
        <button aria-label="Desktop layout" className="border-b-2 border-[#117865] px-px pb-[2px]">
          <Svg size={13} box={13}><path d="M.5 1.500h12v8H.5zM5 9.500V12M8 9.500V12M3.500 12h6" /></Svg>
        </button>
        <button aria-label="Mobile layout" className="ml-[14px]"><Smartphone size={14} strokeWidth={1.500} /></button>
        <button aria-label="Previous page" className="ml-3 text-[8px] text-[#aaa]">‹</button>
        <button aria-label="Next page" className="ml-[11px] text-[8px] text-[#aaa]">›</button>
      </div>
      <button className="w-[78px] border-l border-[#8f8e8c] bg-white">Voters Analysis</button>
      <button className="relative w-[90px] border-b-2 border-l border-b-[#117865] border-l-[#c9c8c6] bg-white pt-[2px] font-semibold text-[#222]">
        Overview Analysis
        <span className="absolute top-[1px] right-[2px] text-[6px]">x</span>
      </button>
      <button className="w-[96px] border-l border-[#c9c8c6] bg-white">Satisfaction Analysis</button>
      <button aria-label="New page" className="w-[26px] bg-[#117865] text-[11px] font-bold text-white">+</button>
    </nav>
  )
}

function StatusBar() {
  return (
    <div className="flex h-[15px] items-center border-t border-[#e3e2e0] bg-[#f4f3f2] pr-3 pl-[3px] text-[7px] text-[#555]">
      <span className="flex-1">Page 2 of 3</span>
      <button aria-label="Zoom out">-</button>
      <input
        type="range"
        aria-label="Zoom"
        min="10"
        max="200"
        defaultValue="80"
        className="mx-[3px] h-[9px] w-[66px] appearance-none bg-transparent [&::-webkit-slider-runnable-track]:h-px [&::-webkit-slider-runnable-track]:bg-[#8a8886] [&::-webkit-slider-thumb]:-mt-[3px] [&::-webkit-slider-thumb]:h-[7px] [&::-webkit-slider-thumb]:w-[3px] [&::-webkit-slider-thumb]:appearance-none [&::-webkit-slider-thumb]:bg-[#444]"
      />
      <button aria-label="Zoom in" className="text-[9px] leading-none">+</button>
      <span className="ml-2">67%</span>
      <button aria-label="Fit to page" className="ml-3">
        <Svg size={11} box={11}><path d="M.5 1.500h10v8H.5z" strokeWidth="1.500" /><path d="M3 4l-2-2M8 4l2-2M3 7L1 9M8 7l2 2" /></Svg>
      </button>
    </div>
  )
}

const apps: [string, ReactNode][] = [
  ['Start', <path d="M1 1h6.500v6.500H1zM8.500 1H15v6.500H8.500zM1 8.500h6.500V15H1zM8.500 8.500H15V15H8.500z" fill="#4cc2f1" stroke="none" />],
  ['Search', <><circle cx="7" cy="7" r="5" stroke="#d5d8da" strokeWidth="1.800" fill="#3c4447" /><path d="M10.500 10.500L15 15" stroke="#d5d8da" strokeWidth="2" /></>],
  ['Task view', <><path d="M1 6h9v8H1z" fill="#8e9396" stroke="none" /><path d="M5 2h11v9H5z" fill="#eef0f1" stroke="none" /></>],
  ['Outlook', <><path d="M5 1h10v12H5z" fill="#7fc4f5" stroke="none" /><path d="M6 7l9-3v11H4z" fill="#1f6fd0" stroke="none" /><path d="M0 6h8v8H0z" fill="#2657c9" stroke="none" /></>],
  ['File Explorer', <><path d="M0 1h6l2 2h7v5H0z" fill="#e0a32e" stroke="none" /><path d="M0 5h16v8H0z" fill="#f8cf5c" stroke="none" /><path d="M4 11h8v4H4z" fill="#3a8fd9" stroke="none" /></>],
  ['Store', <><path d="M5 4V1h6v3" stroke="#cfd3d5" /><path d="M1 4h14v11H1z" fill="#f3f4f5" stroke="none" /><path d="M4.500 6h3v3h-3z" fill="#e5533c" stroke="none" /><path d="M8.500 6h3v3h-3z" fill="#6dac45" stroke="none" /><path d="M4.500 10h3v3h-3z" fill="#3a8fd9" stroke="none" /><path d="M8.500 10h3v3h-3z" fill="#f0b52e" stroke="none" /></>],
  ['Premiere', <><path d="M1 1h14v14H1z" fill="#1f0a33" stroke="#a33bb5" /><text x="8" y="11" fontSize="8" textAnchor="middle" fill="#cf78e8" stroke="none">Pr</text></>],
  ['Teams', <><circle cx="6" cy="4" r="2.500" fill="#8b90ec" stroke="none" /><circle cx="12" cy="4.500" r="2" fill="#5a62c9" stroke="none" /><path d="M7 7h8v4c0 4-6 5-8 2z" fill="#7b83eb" stroke="none" /><path d="M1 7h8v7H1z" fill="#4b53bc" stroke="none" /><path d="M3 9h4M5 9v4" stroke="#fff" /></>],
  ['Copilot', <><path d="M2 10C2 4 8 0 13 3c3 2 2 6 0 8l-4 4c-3 1-7 0-7-5z" fill="#3fa7d6" stroke="none" /><path d="M8 9l7-3c1 5-3 9-8 9z" fill="#49c2a0" stroke="none" /><path d="M2 10c1-4 4-6 8-6L5 15z" fill="#8fd3f4" stroke="none" /></>],
  ['WhatsApp', <><path d="M1 15l1-4a7 7 0 1 1 3 3z" fill="#14281f" stroke="#35c46a" strokeWidth="1.500" /><path d="M5.500 5c0 3 2.500 5.500 5.500 5.500" stroke="#35c46a" strokeWidth="1.800" /></>],
  ['Edge', <><circle cx="8" cy="8" r="7" fill="#2a7fd4" stroke="none" /><path d="M2 6c2-6 11-7 13 1 0 4-5 4-6 2 0-4-4-5-7-3z" fill="#4fc98a" stroke="none" /><path d="M8 10h8v5H8z" fill="#e9a83a" stroke="none" /></>],
  ['TeamViewer', <><circle cx="8" cy="8" r="7" fill="#fff" stroke="#1a2f9c" strokeWidth="2" /><path d="M2.500 8L6 5v2h4V5l3.500 3-3.500 3V9H6v2z" fill="#1a2f9c" stroke="none" /></>],
  ['Remote', <path d="M3 4l4 4-4 4M13 4L9 8l4 4M0 8h6M10 8h6" stroke="#ef8a2c" strokeWidth="1.600" />],
  ['Player', <><path d="M1 1h14v14H1z" fill="#ee7f22" stroke="none" /><path d="M4.500 4l7 4-7 4z" fill="#fff" stroke="none" /><path d="M10 10h4v4h-4z" fill="#f7c08f" stroke="none" /></>],
  ['Power BI', <><path d="M9 1h5v14H9z" fill="#e2a814" stroke="none" /><path d="M5.500 5h5v10h-5z" fill="#f2c52e" stroke="none" /><path d="M2 9h5v6H2z" fill="#f8dc6a" stroke="none" /></>],
  ['Chrome', <><circle cx="7.500" cy="8.500" r="6.500" fill="#f3c73b" stroke="none" /><path d="M1.500 6a6.500 6.500 0 0 1 12 0z" fill="#e0453a" stroke="none" /><path d="M1.500 6c-2 5 2 9 6 9L5 9z" fill="#35a853" stroke="none" /><circle cx="7.500" cy="8.500" r="2.800" fill="#3c7de0" stroke="#fff" /><circle cx="13" cy="3" r="2.500" fill="#3b3f7a" stroke="none" /></>],
]

function Taskbar() {
  return (
    <footer className="flex h-8 items-center bg-[#1d262b] text-[7px] text-[#e3e6e8]">
      <div className="flex-1" />
      <div className="flex h-full">
        {apps.map(([name, icon]) => (
          <button
            key={name}
            aria-label={name}
            className={`relative grid h-8 w-[21px] place-items-center ${name === 'Power BI' ? 'bg-[#2a3338]' : ''}`}
          >
            <Svg size={12} box={16}>{icon}</Svg>
            {name === 'Power BI' && <span className="absolute bottom-[3px] h-[2px] w-[6px] rounded-full bg-[#4cc2f1]" />}
            {(name === 'File Explorer' || name === 'Chrome') && (
              <span className="absolute bottom-[3px] h-[2px] w-[2px] rounded-full bg-[#9aa0a3]" />
            )}
          </button>
        ))}
      </div>
      <div className="flex flex-1 items-center justify-end">
        <button aria-label="Hidden icons"><ChevronUp size={10} /></button>
        <button className="ml-3">ENG</button>
        <button aria-label="Network, volume and battery" className="ml-3 flex items-center gap-[5px]">
          <Wifi size={10} />
          <Volume1 size={10} />
          <Svg size={13} box={13}>
            <path d="M.5 4h11v6H.5z" fill="#a9d39e" stroke="#d9eed3" />
            <path d="M12.500 6v2M6 1v4M4 3.500h4" stroke="#e8f5e4" />
          </Svg>
        </button>
        <button className="mr-[13px] ml-3 text-right leading-[10px]">
          2:33 AM
          <br />
          4/5/2026
        </button>
      </div>
    </footer>
  )
}

export default function App() {
  return (
    <div className="flex min-h-screen flex-col bg-[#f2f1f0] font-['Open_Sans','Noto_Sans',sans-serif]">
      <TitleBar />
      <MenuTabs />
      <Ribbon />
      <div className="flex flex-1">
        <div className="flex min-w-0 flex-1 flex-col">
          <div className="flex flex-1">
            <ViewRail />
            <Report />
            <FiltersPane />
          </div>
          <PageTabs />
        </div>
        <VisualizationsPane />
        <DataPane />
      </div>
      <StatusBar />
      <Taskbar />
    </div>
  )
}
